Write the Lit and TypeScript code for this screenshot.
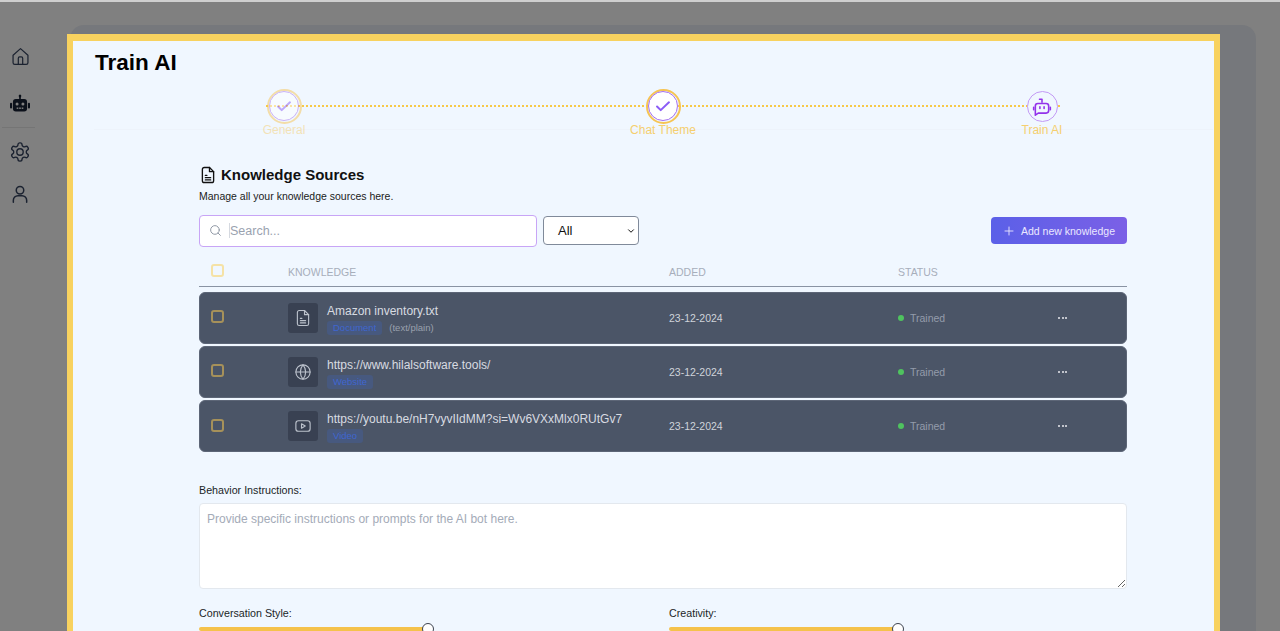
import { LitElement, html, css, svg } from "lit";
import { customElement } from "lit/decorators.js";

const ic = (size: number, body: unknown, sw = 1.8) => html`<svg width=${size} height=${size} viewBox="0 0 24 24" fill="none" stroke="currentColor" stroke-width=${sw} stroke-linecap="round" stroke-linejoin="round">${body}</svg>`;

const homeI = svg`<path d="M3.5 10.5 12 3l8.5 7.5V19a2 2 0 0 1-2 2h-13a2 2 0 0 1-2-2z"/><path d="M9.5 21v-7a1.5 1.5 0 0 1 1.5-1.5h2a1.5 1.5 0 0 1 1.5 1.5v7"/>`;
const gearI = svg`<path d="M12.22 2h-.44a2 2 0 0 0-2 2v.18a2 2 0 0 1-1 1.73l-.43.25a2 2 0 0 1-2 0l-.15-.08a2 2 0 0 0-2.73.73l-.22.38a2 2 0 0 0 .73 2.73l.15.1a2 2 0 0 1 1 1.72v.51a2 2 0 0 1-1 1.74l-.15.09a2 2 0 0 0-.73 2.73l.22.38a2 2 0 0 0 2.73.73l.15-.08a2 2 0 0 1 2 0l.43.25a2 2 0 0 1 1 1.73V20a2 2 0 0 0 2 2h.44a2 2 0 0 0 2-2v-.18a2 2 0 0 1 1-1.73l.43-.25a2 2 0 0 1 2 0l.15.08a2 2 0 0 0 2.73-.73l.22-.39a2 2 0 0 0-.73-2.73l-.15-.08a2 2 0 0 1-1-1.74v-.5a2 2 0 0 1 1-1.74l.15-.09a2 2 0 0 0 .73-2.73l-.22-.38a2 2 0 0 0-2.73-.73l-.15.08a2 2 0 0 1-2 0l-.43-.25a2 2 0 0 1-1-1.73V4a2 2 0 0 0-2-2z"/><circle cx="12" cy="12" r="3.5"/>`;
const userI = svg`<circle cx="12" cy="7.5" r="4.5"/><path d="M4 22v-2.5A5.5 5.5 0 0 1 9.5 14h5a5.5 5.5 0 0 1 5.5 5.5V22"/>`;
const fileI = svg`<path d="M14 2H7a2.5 2.5 0 0 0-2.5 2.5v15A2.5 2.5 0 0 0 7 22h10a2.5 2.5 0 0 0 2.5-2.5V7.5z"/><path d="M14 2v5.5h5.5"/><path d="M8.5 12.5h2M8.5 15.5h7M8.5 18.5h7"/>`;
const globeI = svg`<circle cx="12" cy="12" r="9.5"/><path d="M2.5 12h19"/><path d="M12 2.5a14.5 14.5 0 0 1 0 19 14.5 14.5 0 0 1 0-19"/>`;
const videoI = svg`<rect x="2.5" y="5" width="19" height="14" rx="3.5"/><path d="m10 9 5 3-5 3z"/>`;
const searchI = svg`<circle cx="11" cy="11" r="8"/><path d="m21 21-4.3-4.3"/>`;
const checkI = svg`<path d="m5.5 12.5 4 4L18.5 8"/>`;
const plusI = svg`<path d="M12 4v16M4 12h16"/>`;
const chevI = svg`<path d="m6 9 6 6 6-6"/>`;
const chatBotI = svg`<path d="M12 7.5V3.8H9"/><path d="M4 12a3 3 0 0 1 3-3h10a3 3 0 0 1 3 3v5.5a3 3 0 0 1-3 3H7.5L4 23z"/><path d="M2 13.5v3M22 13.5v3M9.5 13v2M14.5 13v2"/>`;

const rows = [
  { icon: fileI, name: "Amazon inventory.txt", tag: "Document", mime: "(text/plain)" },
  { icon: globeI, name: "https://www.hilalsoftware.tools/", tag: "Website", mime: "" },
  { icon: videoI, name: "https://youtu.be/nH7vyvIIdMM?si=Wv6VXxMlx0RUtGv7", tag: "Video", mime: "" },
];

@customElement("app-root")
export class AppRoot extends LitElement {
  static styles = css`
    :host { display: block; height: 631px; overflow: hidden; background: #808080; border-top: 2px solid #cfcfcf; box-sizing: border-box; font-family: "Liberation Sans", Arial, sans-serif; color: #000; }
    * { box-sizing: border-box; }
    .shell { display: flex; height: 629px; overflow: hidden; }
    .side { width: 70px; flex: none; display: flex; flex-direction: column; align-items: flex-start; padding-top: 44px; color: #1b2230; }
    .nav { width: 40px; height: 20px; display: flex; align-items: center; justify-content: center; }
    .nav.bot { margin-top: 28px; color: #0c111b; }
    .rule { width: 33px; height: 1px; margin: 13px 0 0 2px; background: #757575; }
    .nav.gear { margin-top: 14px; }
    .nav.user { margin-top: 22px; }
    .under { flex: none; width: 1186px; height: 700px; margin-top: 23px; padding-top: 9px; background: #76787c; border-radius: 14px 14px 0 0; }
    .panel { width: 1153px; height: 700px; margin-left: -3px; border: solid #f8d25f; border-width: 7px 6px; background: #f0f7ff; padding: 8px 0 0 22px; }
    h1 { margin: 0; font-size: 22.5px; line-height: 27px; font-weight: 700; }
    .stepper { position: relative; width: 818px; margin: 12.5px 0 0 159px; display: flex; justify-content: space-between; height: 49px; }
    .track { position: absolute; left: 12px; right: 12px; top: 16px; border-top: 2px dotted #f7c948; }
    .step { position: relative; width: 60px; display: flex; flex-direction: column; align-items: center; color: #f5cf6f; }
    .step.done { opacity: .5; }
    .dot { width: 35px; height: 35px; border-radius: 50%; border: 2.5px solid #f6c453; display: flex; align-items: center; justify-content: center; }
    .dot span { width: 30px; height: 30px; border-radius: 50%; border: 1.5px solid #a56ff0; background: #fff; display: flex; align-items: center; justify-content: center; color: #8b5cf6; }
    .step.last .dot { border: 0; }
    .step.last .dot span { width: 31px; height: 31px; background: #f0f7ff; border-color: #c39af5; color: #9333ea; }
    .step small { font-size: 12px; line-height: 14px; margin-top: -1px; white-space: nowrap; }
    .divider { height: 1px; width: 1119px; margin-left: -1px; background: #edf3fb; margin-top: -9px; }
    .content { width: 928px; margin-left: 104px; }
    .head { display: flex; align-items: center; gap: 4px; margin-top: 35px; height: 20px; color: #111; }
    h2 { margin: 0; font-size: 15px; line-height: 20px; font-weight: 700; }
    .sub { font-size: 10.5px; line-height: 14px; margin-top: 4px; color: #1b1b1b; }
    .tools { display: flex; align-items: center; margin-top: 12px; height: 32px; }
    .search { width: 338px; height: 32px; border: 1.5px solid #c8a5f6; border-radius: 4px; background: #fff; display: flex; align-items: center; gap: 7px; padding: 0 9px; color: #8e96a4; }
    .search input { border: 0; outline: 0; background: transparent; flex: 1; min-width: 0; font: 12.5px "Liberation Sans", Arial, sans-serif; padding: 0; border-left: 1px solid #d5d9e0; height: 15px; }
    .search input::placeholder { color: #9aa2af; opacity: 1; }
    .select { width: 96px; height: 29px; margin-left: 6px; border: 1.5px solid #808a9a; border-radius: 4px; background: #fff; color: #111; font-size: 13px; display: flex; align-items: center; justify-content: space-between; padding: 0 2px 0 14px; }
    .add { margin-left: auto; width: 136px; height: 27px; border: 0; border-radius: 4px; background: linear-gradient(90deg, #5b60e8, #7b60e6); color: #ebe8ff; font: 10.5px "Liberation Sans", Arial, sans-serif; display: flex; align-items: center; gap: 6px; padding: 0 0 0 12px; }
    .grid { display: grid; grid-template-columns: 77px 381px 229px 160px 1fr; align-items: center; padding-left: 12px; }
    .thead { margin-top: 9px; height: 31px; padding-top: 3px; border-bottom: 1.5px solid #8993a3; color: #a7aebb; font-size: 10.5px; }
    .box { width: 13px; height: 13px; border: 2px solid #a6915a; border-radius: 3px; }
    .thead .box { border-color: #f5e2a6; margin-top: -4px; }
    .row .box { margin-top: -2px; }
    .list { display: flex; flex-direction: column; gap: 2.3px; margin-top: 5px; }
    .row { height: 52px; background: #4b5567; border-radius: 6px; color: #d9dde3; font-size: 10.5px; border: 1px solid #5d6677; grid-template-columns: 77px 381px 229px 160px 1fr; padding-left: 11px; }
    .file { display: flex; align-items: center; gap: 9px; min-width: 0; }
    .thumb { width: 30px; height: 30px; border-radius: 3px; background: #394152; color: #bcc2cc; display: flex; align-items: center; justify-content: center; flex: none; }
    .meta { display: flex; flex-direction: column; gap: 2px; white-space: nowrap; margin-top: 2px; }
    .name { font-size: 12px; line-height: 16px; color: #d8dbe1; }
    .tagline { display: flex; align-items: center; gap: 7px; }
    .tag { height: 14px; line-height: 14px; padding: 0 6px; background: #47597f; border-radius: 3px; color: #3f66cf; font-size: 9.5px; }
    .mime { font-size: 9.5px; color: #9aa1ae; }
    .date { color: #cfd3da; }
    .status { display: flex; align-items: center; gap: 6px; color: #949cab; }
    .status i { width: 6px; height: 6px; border-radius: 50%; background: #4fc35f; }
    .more { display: flex; gap: 1.5px; }
    .more b { width: 2px; height: 2px; border-radius: 50%; background: #e8eaee; }
    label { display: block; font-size: 10.7px; line-height: 14px; color: #1b1f27; }
    .beh { margin-top: 31px; }
    textarea { display: block; width: 928px; height: 86px; margin-top: 6px; border: 1.5px solid #e3e8ee; border-radius: 4px; background: #fff; padding: 8px 7px; font: 12px/15px "Liberation Sans", Arial, sans-serif; outline: 0; resize: both; }
    textarea::placeholder { color: #a4abb8; opacity: 1; }
    .sliders { display: grid; grid-template-columns: 458px 458px; column-gap: 12px; margin-top: 17px; }
    .slider { height: 4px; margin-top: 7px; position: relative; }
    .fill { height: 100%; background: #f5c24b; border-radius: 3px; }
    .knob { position: absolute; top: -4px; width: 12px; height: 12px; margin-left: -6px; border: 1.5px solid #3d4350; border-radius: 50%; background: #fff; }
  `;

  render() {
    return html`<div class="shell">
      <nav class="side">
        <div class="nav">${ic(21, homeI, 1.4)}</div>
        <div class="nav bot"><svg width="20" height="20" viewBox="0 0 24 24" fill="currentColor"><rect x="11" y="1" width="2" height="5"/><circle cx="12" cy="2.5" r="1.6"/><rect x="3.5" y="6" width="17" height="15" rx="3.5"/><rect x="0" y="10.5" width="2.5" height="7" rx="1.2"/><rect x="21.5" y="10.5" width="2.5" height="7" rx="1.2"/><circle cx="8.5" cy="12" r="1.8" fill="#808080"/><circle cx="15.5" cy="12" r="1.8" fill="#808080"/><rect x="8" y="16.2" width="2" height="1.7" fill="#808080"/><rect x="11" y="16.2" width="2" height="1.7" fill="#808080"/><rect x="14" y="16.2" width="2" height="1.7" fill="#808080"/></svg></div>
        <div class="rule"></div>
        <div class="nav gear">${ic(22, gearI, 1.5)}</div>
        <div class="nav user">${ic(20, userI, 1.8)}</div>
      </nav>
      <div class="under">
        <main class="panel">
          <h1>Train AI</h1>
          <div class="stepper">
            <div class="track"></div>
            <div class="step done"><div class="dot"><span>${ic(22, checkI, 2.2)}</span></div><small>General</small></div>
            <div class="step"><div class="dot"><span>${ic(22, checkI, 2.2)}</span></div><small>Chat Theme</small></div>
            <div class="step last"><div class="dot"><span>${ic(20, chatBotI, 1.9)}</span></div><small>Train AI</small></div>
          </div>
          <div class="divider"></div>
          <section class="content">
            <div class="head">${ic(18, fileI, 1.8)}<h2>Knowledge Sources</h2></div>
            <div class="sub">Manage all your knowledge sources here.</div>
            <div class="tools">
              <div class="search">${ic(13, searchI, 1.8)}<input placeholder="Search..." /></div>
              <div class="select"><span>All</span>${ic(10, chevI, 2.4)}</div>
              <button class="add">${ic(12, plusI, 1.8)}<span>Add new knowledge</span></button>
            </div>
            <div class="grid thead"><div class="box"></div><span>KNOWLEDGE</span><span>ADDED</span><span>STATUS</span><span></span></div>
            <div class="list">
              ${rows.map((r) => html`<div class="grid row">
                <div class="box"></div>
                <div class="file"><div class="thumb">${ic(18, r.icon, 1.5)}</div><div class="meta"><span class="name">${r.name}</span><span class="tagline"><span class="tag">${r.tag}</span>${r.mime ? html`<span class="mime">${r.mime}</span>` : ""}</span></div></div>
                <span class="date">23-12-2024</span>
                <span class="status"><i></i>Trained</span>
                <span class="more"><b></b><b></b><b></b></span>
              </div>`)}
            </div>
            <label class="beh">Behavior Instructions:</label>
            <textarea placeholder="Provide specific instructions or prompts for the AI bot here."></textarea>
            <div class="sliders">
              <div><label>Conversation Style:</label><div class="slider"><div class="fill" style="width:50%"></div><div class="knob" style="left:50%"></div></div></div>
              <div><label>Creativity:</label><div class="slider"><div class="fill" style="width:50%"></div><div class="knob" style="left:50%"></div></div></div>
            </div>
          </section>
        </main>
      </div>
    </div>`;
  }
}
